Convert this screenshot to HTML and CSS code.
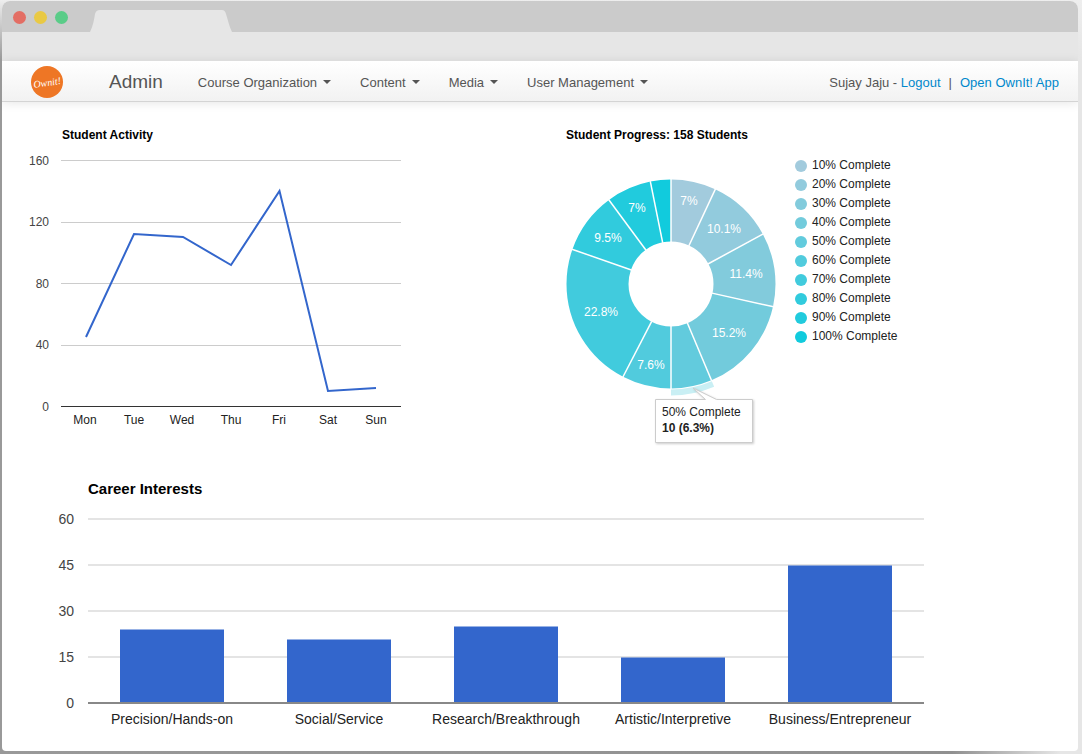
FILE: index.html
```html
<!DOCTYPE html>
<html lang="en">
<head>
  <meta charset="UTF-8" />
  <title>OwnIt! Admin</title>
  <meta name="viewport" content="width=device-width, initial-scale=1.0">
  <link rel="stylesheet" href="styles.css">
</head>
<body>

<div class="window">
  <div class="tab-bar">
    <span class="dot red"></span>
    <span class="dot yellow"></span>
    <span class="dot green"></span>
    <svg class="tab" width="142" height="22" viewBox="0 0 142 22" aria-hidden="true">
      <path d="M0 22 C3 16 4 10 5 4 Q6 0 10 0 H132 Q135 0 136 4 C138 10 139 16 142 22 Z" fill="#e6e6e6" />
    </svg>
  </div>
  <div class="address-bar"></div>

  <header class="navbar">
    <a class="logo" href="#" aria-label="OwnIt!">
      <svg width="32" height="32" viewBox="0 0 32 32">
        <circle cx="16" cy="16" r="16" fill="#ee7625" />
        <text class="logo-text" x="16" y="20" text-anchor="middle" transform="rotate(-9 16 16)">Ownit!</text>
      </svg>
    </a>
    <a class="brand" href="#">Admin</a>
    <nav class="menu">
      <button type="button">Course Organization</button>
      <button type="button">Content</button>
      <button type="button">Media</button>
      <button type="button">User Management</button>
    </nav>
    <div class="user">Sujay Jaju - <a href="#">Logout</a><span class="divider">|</span><a href="#">Open OwnIt! App</a></div>
  </header>

  <main>
    <div class="charts-row">
      <section class="activity">
        <h2>Student Activity</h2>
        <svg class="chart" width="390" height="300" viewBox="0 0 390 300">
          <g stroke="#ccc">
            <path d="M39 17.5H379M39 79.5H379M39 140.5H379M39 202.5H379" />
            <path d="M39 263.5H379" stroke="#333" />
          </g>
          <g class="axis-y">
            <text x="27" y="22">160</text>
            <text x="27" y="83">120</text>
            <text x="27" y="145">80</text>
            <text x="27" y="206">40</text>
            <text x="27" y="268">0</text>
          </g>
          <g class="axis-x">
            <text x="63" y="281">Mon</text>
            <text x="112" y="281">Tue</text>
            <text x="160" y="281">Wed</text>
            <text x="209" y="281">Thu</text>
            <text x="257" y="281">Fri</text>
            <text x="306" y="281">Sat</text>
            <text x="354" y="281">Sun</text>
          </g>
          <polyline points="64,194 112,91 161,94 209,122 257.5,48 306,248 354,245" fill="none" stroke="#36c" stroke-width="2" />
        </svg>
      </section>

      <section class="progress">
        <h2>Student Progress: 158 Students</h2>
        <div class="donut-wrap">
          <svg class="chart" width="212" height="300" viewBox="0 0 212 300">
            <!-- one unit of pathLength = one student -->
            <g transform="rotate(-90 105 141)" fill="none" stroke-width="62">
              <circle cx="105" cy="141" r="73.5" pathLength="158" stroke="#a2cbdd" stroke-dasharray="11 147" />
              <circle cx="105" cy="141" r="73.5" pathLength="158" stroke="#92cbdd" stroke-dasharray="16 142" stroke-dashoffset="-11" />
              <circle cx="105" cy="141" r="73.5" pathLength="158" stroke="#82cbdc" stroke-dasharray="18 140" stroke-dashoffset="-27" />
              <circle cx="105" cy="141" r="73.5" pathLength="158" stroke="#72cbdc" stroke-dasharray="24 134" stroke-dashoffset="-45" />
              <circle cx="105" cy="141" r="73.5" pathLength="158" stroke="#62cbdd" stroke-dasharray="10 148" stroke-dashoffset="-69" />
              <circle cx="105" cy="141" r="73.5" pathLength="158" stroke="#51cbdd" stroke-dasharray="12 146" stroke-dashoffset="-79" />
              <circle cx="105" cy="141" r="73.5" pathLength="158" stroke="#41cbdd" stroke-dasharray="36 122" stroke-dashoffset="-91" />
              <circle cx="105" cy="141" r="73.5" pathLength="158" stroke="#31cbdd" stroke-dasharray="15 143" stroke-dashoffset="-127" />
              <circle cx="105" cy="141" r="73.5" pathLength="158" stroke="#21cbdd" stroke-dasharray="11 147" stroke-dashoffset="-142" />
              <circle cx="105" cy="141" r="73.5" pathLength="158" stroke="#11cbdd" stroke-dasharray="5 153" stroke-dashoffset="-153" />
              <!-- hovered slice -->
              <circle cx="105" cy="141" r="108.5" pathLength="158" stroke="#c9eff4" stroke-width="6" stroke-dasharray="10 148" stroke-dashoffset="-69" />
            </g>
            <g stroke="#fff" stroke-width="1.5">
              <path d="M105 99V36" />
              <path d="M105 99V36" transform="rotate(25.06 105 141)" />
              <path d="M105 99V36" transform="rotate(61.52 105 141)" />
              <path d="M105 99V36" transform="rotate(102.53 105 141)" />
              <path d="M105 99V36" transform="rotate(157.22 105 141)" />
              <path d="M105 99V36" transform="rotate(180 105 141)" />
              <path d="M105 99V36" transform="rotate(207.34 105 141)" />
              <path d="M105 99V36" transform="rotate(289.37 105 141)" />
              <path d="M105 99V36" transform="rotate(323.54 105 141)" />
              <path d="M105 99V36" transform="rotate(348.61 105 141)" />
            </g>
            <g class="slice-label">
              <text x="123" y="62">7%</text>
              <text x="158" y="90">10.1%</text>
              <text x="180" y="135">11.4%</text>
              <text x="163" y="194">15.2%</text>
              <text x="85" y="226">7.6%</text>
              <text x="35" y="173">22.8%</text>
              <text x="42" y="99">9.5%</text>
              <text x="71" y="69">7%</text>
            </g>
            <g class="tip">
              <path d="M89.5 256.5H139.5L127 245L150.5 256.5H186.5V299.5H89.5Z" fill="#fff" stroke="#ccc" />
              <text x="96" y="273">50% Complete</text>
              <text class="tip-value" x="96" y="289">10 (6.3%)</text>
            </g>
          </svg>
          <ul class="legend">
            <li class="p10">10% Complete</li>
            <li class="p20">20% Complete</li>
            <li class="p30">30% Complete</li>
            <li class="p40">40% Complete</li>
            <li class="p50">50% Complete</li>
            <li class="p60">60% Complete</li>
            <li class="p70">70% Complete</li>
            <li class="p80">80% Complete</li>
            <li class="p90">90% Complete</li>
            <li class="p100">100% Complete</li>
          </ul>
        </div>
      </section>
    </div>

    <section class="career">
      <h2>Career Interests</h2>
      <svg class="chart" width="880" height="240" viewBox="0 0 880 240">
        <path d="M38 21H874M38 67H874M38 113H874M38 159H874" stroke="#e4e4e4" stroke-width="2" />
        <g fill="#36c">
          <rect x="70" y="131.5" width="104" height="73" />
          <rect x="237" y="141.5" width="104" height="63" />
          <rect x="404" y="128.5" width="104" height="76" />
          <rect x="571" y="159.5" width="104" height="45" />
          <rect x="738" y="67.5" width="104" height="137" />
        </g>
        <path d="M38 205H874" stroke="#888" stroke-width="2" />
        <g class="axis-y">
          <text x="24" y="26">60</text>
          <text x="24" y="72">45</text>
          <text x="24" y="118">30</text>
          <text x="24" y="164">15</text>
          <text x="24" y="210">0</text>
        </g>
        <g class="axis-x">
          <text x="122" y="226">Precision/Hands-on</text>
          <text x="289" y="226">Social/Service</text>
          <text x="456" y="226">Research/Breakthrough</text>
          <text x="623" y="226">Artistic/Interpretive</text>
          <text x="790" y="226">Business/Entrepreneur</text>
        </g>
      </svg>
    </section>
  </main>
</div>

</body>
</html>
```
FILE: styles.css
```css
* {
  box-sizing: border-box;
}

body {
  margin: 0;
  padding: 1px 4px 3px 2px;
  min-height: 100vh;
  display: flex;
  font-family: "Liberation Sans", Arial, sans-serif;
  font-size: 13px;
  color: #222;
  background:
    linear-gradient(to bottom, #eee 0, rgba(238, 238, 238, 0) 60px),
    linear-gradient(to right, #999 0, #909090 88%, #e6e6e6 98%);
}

.window {
  flex: 1;
  min-width: 0;
  background: #fff;
  border-radius: 8px 8px 4px 4px;
  overflow: hidden;
}

.tab-bar {
  display: flex;
  align-items: center;
  gap: 8px;
  height: 31px;
  padding-left: 11px;
  background: #cbcbcb;
}

.dot {
  width: 13px;
  height: 13px;
  margin-top: 2px;
  border-radius: 50%;
}

.red    { background: #e36e64; }
.yellow { background: #e9c944; }
.green  { background: #5acc88; }

.tab {
  align-self: flex-end;
  margin-left: 14px;
}

.address-bar {
  height: 29px;
  background: #e6e6e6;
}

.navbar {
  display: flex;
  align-items: center;
  height: 41px;
  padding: 2px 19px 0 29px;
  background: linear-gradient(#fff, #f2f2f2);
  border-bottom: 1px solid #d4d4d4;
  box-shadow: 0 1px 10px rgba(0, 0, 0, 0.1);
  color: #555;
}

.logo svg {
  display: block;
}

.logo-text {
  font-family: "Liberation Serif", serif;
  font-size: 10px;
  font-style: italic;
  fill: #fff;
}

.brand {
  margin-left: 46px;
  font-size: 19px;
  color: #555;
  text-decoration: none;
}

.menu {
  display: flex;
  gap: 29px;
  margin-left: 35px;
}

.menu button {
  display: flex;
  align-items: center;
  gap: 6px;
  padding: 0;
  border: 0;
  background: none;
  font: inherit;
  color: #555;
  white-space: nowrap;
}

.menu button::after {
  content: "";
  border: 4px solid transparent;
  border-top-color: #555;
  border-bottom: 0;
}

.user {
  margin-left: auto;
  white-space: nowrap;
}

.user a {
  color: #08c;
  text-decoration: none;
}

.divider {
  margin: 0 8px;
}

main {
  padding-top: 25px;
}

h2 {
  margin: 0;
  font-size: 12px;
  line-height: 16px;
  color: #000;
}

.chart {
  display: block;
  flex-shrink: 0;
  overflow: visible;
  font-size: 12px;
  fill: #222;
}

.charts-row {
  display: grid;
  grid-template-columns: 1fr 1fr;
}

.activity {
  padding-left: 20px;
}

.activity h2 {
  margin-left: 40px;
}

.progress {
  padding-left: 26px;
}

.axis-y {
  text-anchor: end;
  fill: #444;
}

.axis-x,
.slice-label {
  text-anchor: middle;
}

.slice-label {
  fill: #fff;
}

.tip path {
  filter: drop-shadow(1px 1px 1px rgba(0, 0, 0, 0.2));
}

.tip-value {
  font-weight: bold;
}

.donut-wrap {
  display: flex;
  gap: 17px;
}

.legend {
  margin: 0;
  padding: 13px 0 0;
  list-style: none;
  font-size: 12px;
  line-height: 19px;
}

.legend li {
  display: flex;
  align-items: center;
  gap: 5px;
}

.legend li::before {
  content: "";
  width: 12px;
  height: 12px;
  border-radius: 50%;
  background: currentColor;
}

.legend .p10::before  { background: #a2cbdd; }
.legend .p20::before  { background: #92cbdd; }
.legend .p30::before  { background: #82cbdc; }
.legend .p40::before  { background: #72cbdc; }
.legend .p50::before  { background: #62cbdd; }
.legend .p60::before  { background: #51cbdd; }
.legend .p70::before  { background: #41cbdd; }
.legend .p80::before  { background: #31cbdd; }
.legend .p90::before  { background: #21cbdd; }
.legend .p100::before { background: #11cbdd; }

.career {
  padding: 37px 0 0 48px;
}

.career h2 {
  margin-left: 38px;
  font-size: 15px;
  line-height: 18px;
}

.career .chart {
  font-size: 14px;
}
```
